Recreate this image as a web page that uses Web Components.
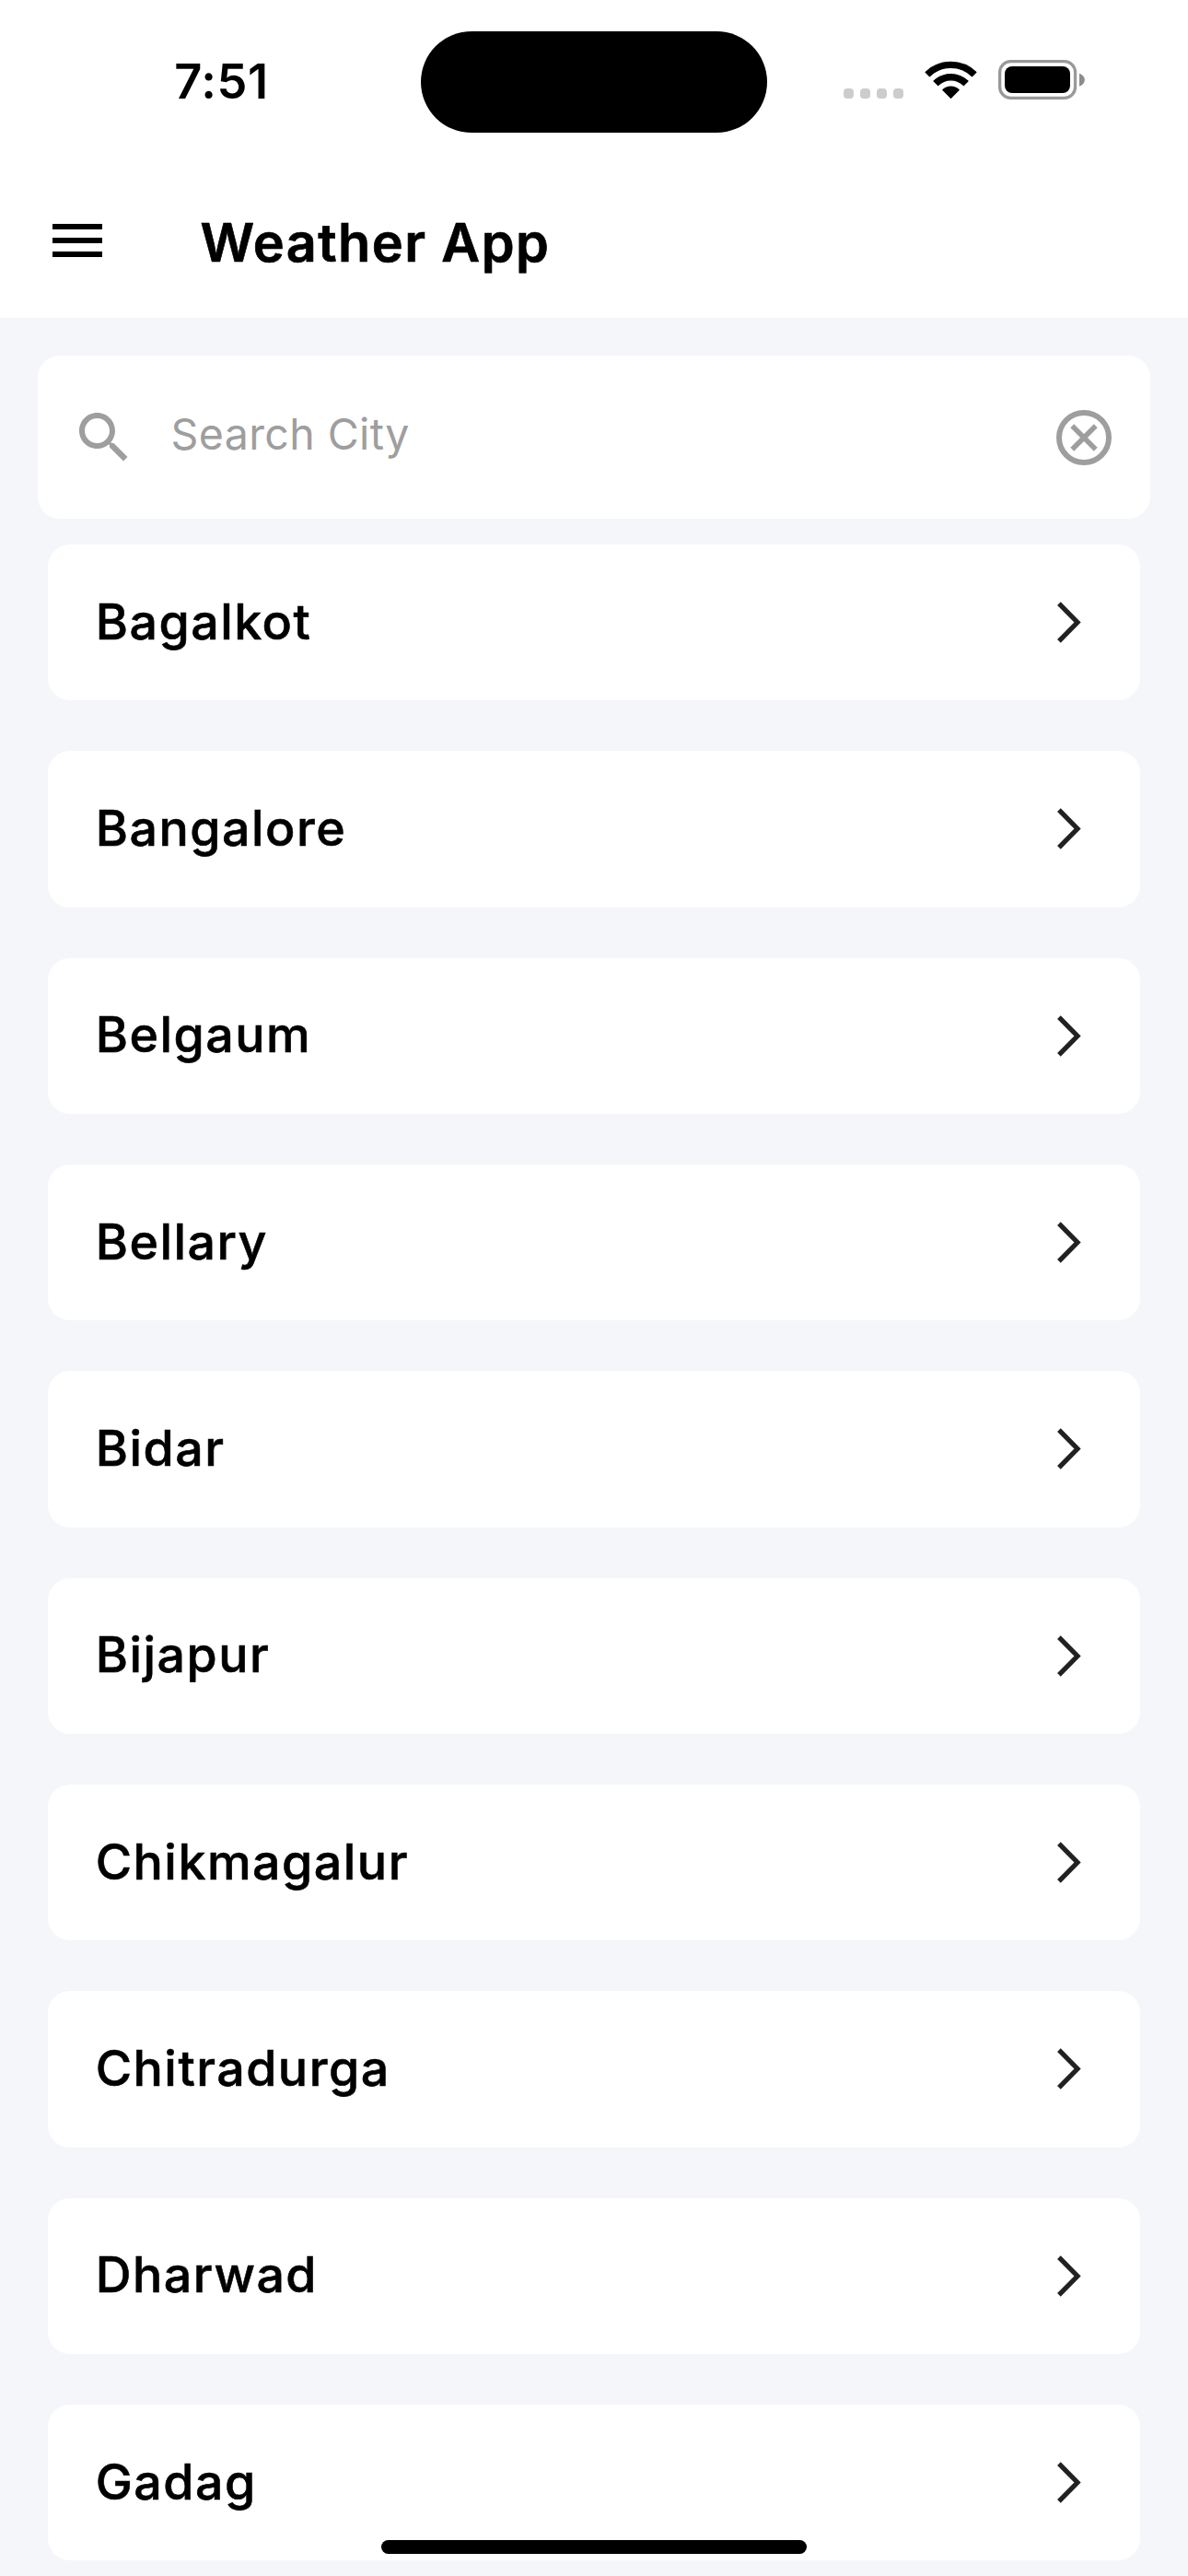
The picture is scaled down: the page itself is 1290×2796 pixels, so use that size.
<!DOCTYPE html>
<html lang="en">
<head>
<meta charset="utf-8">
<title>Weather App</title>
<style>
  html, body { margin: 0; height: 2796px; overflow: hidden; }
  body { width: 1290px; background: #f4f6fa; color: #000; font-family: Inter, "Noto Sans", sans-serif; }
</style>
</head>
<body>
<weather-screen>
  <status-bar slot="status">7:51</status-bar>
  <app-bar slot="bar">Weather App</app-bar>
  <search-field slot="search">Search City</search-field>
  <city-row>Bagalkot</city-row>
  <city-row>Bangalore</city-row>
  <city-row>Belgaum</city-row>
  <city-row>Bellary</city-row>
  <city-row>Bidar</city-row>
  <city-row>Bijapur</city-row>
  <city-row>Chikmagalur</city-row>
  <city-row>Chitradurga</city-row>
  <city-row>Dharwad</city-row>
  <city-row>Gadag</city-row>
</weather-screen>

<script>
const define = (name, markup) => {
  const template = document.createElement('template');
  template.innerHTML = markup;
  customElements.define(name, class extends HTMLElement {
    constructor() {
      super();
      this.attachShadow({ mode: 'open' }).append(template.content.cloneNode(true));
    }
  });
};

define('weather-screen', `
  <style>
    :host { display: flex; flex-direction: column; position: relative; width: 1290px; height: 2796px; overflow: hidden; }
    .search { padding: 41px 41px 28px; }
    .list { display: flex; flex-direction: column; gap: 55.08px; padding: 0 51.7px; }
    .home { position: absolute; left: 414px; bottom: 24px; width: 462px; height: 15px; border-radius: 7.5px; background: #000; }
  </style>
  <slot name="status"></slot>
  <slot name="bar"></slot>
  <div class="search"><slot name="search"></slot></div>
  <div class="list"><slot></slot></div>
  <div class="home"></div>
`);

define('status-bar', `
  <style>
    :host { display: grid; grid-template-columns: 457px 376px 457px; height: 177px; background: #fff; align-items: center; box-sizing: border-box; }
    .time { padding-left: 189.3px; padding-bottom: 1px; font-size: 52.3px; font-weight: 600; letter-spacing: .6px; line-height: 64px; white-space: nowrap; }
    .island { height: 110px; margin-top: 1px; border-radius: 55px; background: #000; }
    .icons { display: flex; align-items: flex-end; padding-left: 83px; height: 43px; margin-bottom: 4px; }
    svg { display: block; flex: none; }
    .dots { display: flex; gap: 7px; padding-bottom: 1px; width: 88px; }
    .dots i { width: 11px; height: 11px; border-radius: 4px; background: #ccc; }
    .wifi { margin-bottom: 1px; margin-right: 23px; }
  </style>
  <div class="time"><slot></slot></div>
  <div class="island"></div>
  <div class="icons">
    <div class="dots"><i></i><i></i><i></i><i></i></div>
    <svg class="wifi" width="57" height="42" viewBox="0 0 57 42" stroke="#000" stroke-width="1.2" stroke-linejoin="round">
      <path d="M0.5 13.2A40.6 40.6 0 0 1 56.5 13.2L52 17.7A33.6 33.6 0 0 0 5 17.7Z" transform="translate(.57 .4) scale(.98)"/>
      <path d="M10 23A26.6 26.6 0 0 1 47 23L42.4 27.6A19.7 19.7 0 0 0 14.6 27.6Z"/>
      <path d="M19.8 32.6A12.4 12.4 0 0 1 37.2 32.6L28.5 41.3Z"/>
    </svg>
    <svg width="95" height="43" viewBox="0 0 95 43">
      <rect x="1.65" y="1.65" width="81.9" height="39.7" rx="11.8" fill="none" stroke="#999" stroke-width="3.3"/>
      <rect x="7" y="7" width="71" height="29" rx="8" fill="#000"/>
      <path d="M88 14.7C91.4 16 93.8 18.6 93.8 21.7S91.4 27.4 88 28.7Z" fill="#8c8c8c"/>
    </svg>
  </div>
`);

define('app-bar', `
  <style>
    :host { display: flex; align-items: center; height: 168px; padding-left: 57px; background: #fff; }
    svg { display: block; flex: none; }
    .title { padding: 3.6px 0 0 106.5px; font-size: 57.5px; font-weight: 600; -webkit-text-stroke: .7px #000; letter-spacing: 1.45px; line-height: 70px; white-space: nowrap; }
  </style>
  <svg width="54" height="36" viewBox="0 0 54 36"><path d="M0 0H54V6H0zM0 15H54V21H0zM0 30H54V36H0z"/></svg>
  <div class="title"><slot></slot></div>
`);

define('search-field', `
  <style>
    :host { display: flex; align-items: center; height: 177px; border-radius: 24px; background: #fff; color: #9e9e9e; box-sizing: border-box; padding: 0 36px; }
    svg { display: block; flex: none; }
    .hint { flex: 1; padding: 0 0 7px 36.5px; font-size: 46.5px; font-weight: 400; letter-spacing: .4px; line-height: 58px; white-space: nowrap; }
  </style>
  <svg width="72" height="72" viewBox="0 0 24 24" fill="currentColor"><path d="M15.5 14h-.79l-.28-.27C15.41 12.59 16 11.11 16 9.5 16 5.91 13.09 3 9.5 3S3 5.91 3 9.5 5.91 16 9.5 16c1.61 0 3.09-.59 4.23-1.57l.27.28v.79l5 4.99L20.49 19l-4.99-5zm-6 0C7.01 14 5 11.99 5 9.5S7.01 5 9.5 5 14 7.01 14 9.5 11.99 14 9.5 14z"/></svg>
  <div class="hint"><slot></slot></div>
  <svg width="72" height="72" viewBox="0 0 24 24" fill="none" stroke="currentColor"><circle cx="12" cy="12" r="9" stroke-width="2"/><path d="M7.75 7.75L16.25 16.25M16.25 7.75L7.75 16.25" stroke-width="1.85"/></svg>
`);

define('city-row', `
  <style>
    :host { display: flex; align-items: center; justify-content: space-between; height: 169.25px; border-radius: 24px; background: #fff; box-sizing: border-box; padding: 0 64.8px 0 52px; }
    .name { padding-bottom: 2px; font-size: 53.7px; font-weight: 500; -webkit-text-stroke: .6px #000; letter-spacing: 1.5px; line-height: 66px; white-space: nowrap; }
    svg { display: block; flex: none; }
  </style>
  <div class="name"><slot></slot></div>
  <svg width="26" height="45" viewBox="0 0 26 45"><path d="M1.9 2.1L22 22.5L1.9 42.9" fill="none" stroke="#212121" stroke-width="5.2"/></svg>
`);
</script>
</body>
</html>
